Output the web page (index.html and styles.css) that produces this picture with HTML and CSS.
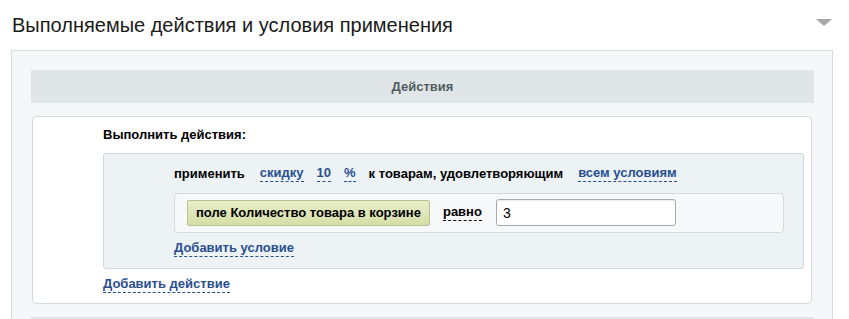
FILE: index.html
```html
<!DOCTYPE html>
<html lang="ru">
<head>
    <meta charset="UTF-8">
    <title>Выполняемые действия и условия применения</title>
    <link rel="stylesheet" href="styles.css">
</head>
<body>
    <div class="section-head">
        <h2 class="section-title">Выполняемые действия и условия применения</h2>
        <span class="toggle"></span>
    </div>

    <div class="panel">
        <div class="panel-bar">Действия</div>

        <div class="card">
            <div class="card-title">Выполнить действия:</div>

            <div class="action-box">
                <div class="action-line">
                    <span class="word">применить</span>
                    <a class="dash-link">скидку</a>
                    <a class="dash-link">10</a>
                    <a class="dash-link">%</a>
                    <span class="word">к товарам, удовлетворяющим</span>
                    <a class="dash-link">всем условиям</a>
                </div>

                <div class="cond-row">
                    <span class="cond-field">поле Количество товара в корзине</span>
                    <a class="dash-link dark">равно</a>
                    <input class="cond-input" type="text" value="3">
                </div>

                <a class="dash-link add-cond">Добавить условие</a>
            </div>

            <a class="dash-link add-action">Добавить действие</a>
        </div>

        <div class="panel-bar next"></div>
    </div>
</body>
</html>
```

FILE: styles.css
```css
body {
    margin: 0;
    font-family: "Liberation Sans", Arial, sans-serif;
    font-size: 13px;
    color: #000;
    background: #fff;
}
.section-head {
    display: flex;
    align-items: center;
    justify-content: space-between;
    height: 50px;
    padding: 0 17px 0 12px;
}
.section-title {
    margin: 0;
    font-size: 20px;
    font-weight: normal;
    color: #1a1a1a;
    line-height: 26px;
    padding-bottom: 1px;
}
.toggle {
    width: 0;
    height: 0;
    border-left: 8px solid transparent;
    border-right: 8px solid transparent;
    border-top: 7px solid #a2a7aa;
    margin-bottom: 5px;
}
.panel {
    margin: 0 16px 0 11px;
    border: 1px solid #d5dcde;
    border-bottom: none;
    background: #f5f7f8;
    padding: 19px 18px 0 19px;
}
.panel-bar {
    height: 33px;
    line-height: 33px;
    background: #e0e6e7;
    text-align: center;
    font-weight: bold;
    color: #535c62;
}
.panel-bar.next {
    margin-top: 13px;
}
.card {
    margin: 13px 2px 0 1px;
    background: #fff;
    border: 1px solid #d3d9dc;
    border-radius: 4px;
    padding: 9px 7px 10px 70px;
}
.card-title {
    font-weight: bold;
    line-height: 17px;
}
.action-box {
    margin-top: 10px;
    background: #edf3f5;
    border: 1px solid #cfd8dc;
    border-radius: 3px;
    padding: 11px 19px 11px 70px;
}
.action-line {
    display: flex;
    align-items: center;
    line-height: 17px;
    font-weight: bold;
}
.word {
    margin-right: 15px;
}
.dash-link {
    font-weight: bold;
    color: #2a4f8f;
    border-bottom: 1px dashed #2a4f8f;
    line-height: 16px;
    margin-right: 13px;
    cursor: pointer;
}
.dash-link.dark {
    color: #000;
    border-bottom-color: #000;
    margin: 0 14px 0 13px;
}
.cond-row {
    display: flex;
    align-items: center;
    margin-top: 11px;
    background: #f6f8f9;
    border: 1px solid #d3dadd;
    border-radius: 4px;
    padding: 5px 12px 6px;
}
.cond-field {
    display: inline-block;
    height: 24px;
    line-height: 24px;
    padding: 0 8px;
    font-weight: bold;
    border: 1px solid #b7c090;
    border-radius: 2px;
    background: linear-gradient(#e8edc9, #d5dea6);
}
.cond-input {
    box-sizing: border-box;
    width: 180px;
    height: 27px;
    border: 1px solid #a3abb1;
    border-radius: 3px;
    padding: 0 6px;
    font-family: "Liberation Sans", Arial, sans-serif;
    font-size: 14px;
    box-shadow: inset 0 1px 1px rgba(0,0,0,0.08);
    background: #fff;
}
.add-cond {
    display: inline-block;
    margin-top: 7px;
}
.add-action {
    display: inline-block;
    margin-top: 7px;
}
```
